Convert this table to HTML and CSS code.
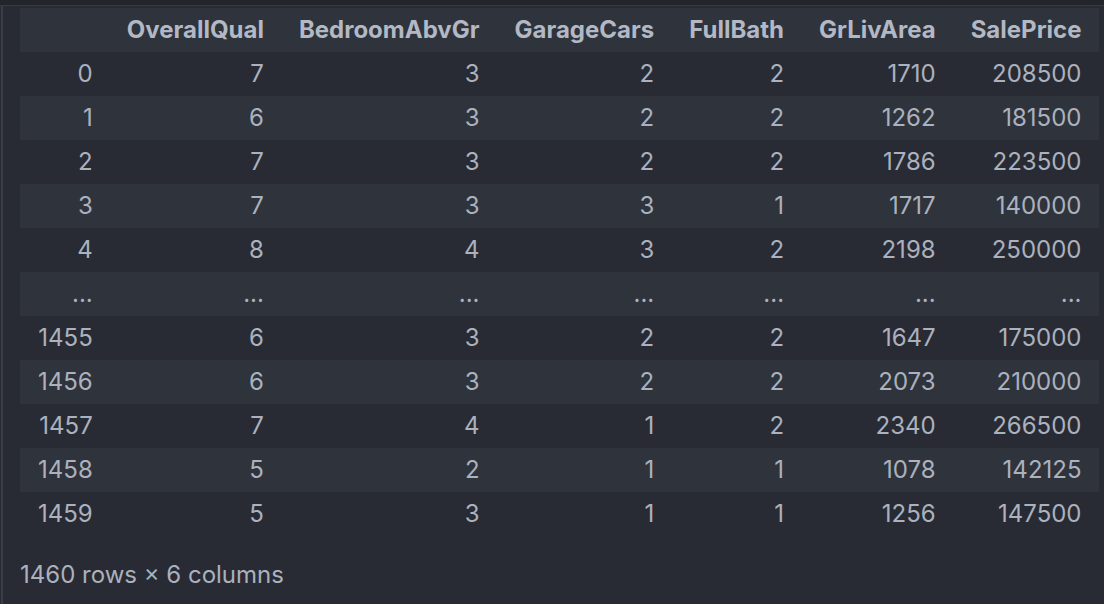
FILE: index.html
```html
<!DOCTYPE html>
<html>
<head>
<meta charset="utf-8">
<link rel="stylesheet" href="styles.css">
</head>
<body>
<div class="topbar"></div>
<div class="output">
  <table class="dataframe">
    <thead>
      <tr><th class="idx"></th><th>OverallQual</th><th>BedroomAbvGr</th><th>GarageCars</th><th>FullBath</th><th>GrLivArea</th><th>SalePrice</th></tr>
    </thead>
    <tbody>
      <tr><th class="idx">0</th><td>7</td><td>3</td><td>2</td><td>2</td><td>1710</td><td>208500</td></tr>
      <tr><th class="idx">1</th><td>6</td><td>3</td><td>2</td><td>2</td><td>1262</td><td>181500</td></tr>
      <tr><th class="idx">2</th><td>7</td><td>3</td><td>2</td><td>2</td><td>1786</td><td>223500</td></tr>
      <tr><th class="idx">3</th><td>7</td><td>3</td><td>3</td><td>1</td><td>1717</td><td>140000</td></tr>
      <tr><th class="idx">4</th><td>8</td><td>4</td><td>3</td><td>2</td><td>2198</td><td>250000</td></tr>
      <tr class="ellipsis"><th class="idx">...</th><td>...</td><td>...</td><td>...</td><td>...</td><td>...</td><td>...</td></tr>
      <tr><th class="idx">1455</th><td>6</td><td>3</td><td>2</td><td>2</td><td>1647</td><td>175000</td></tr>
      <tr><th class="idx">1456</th><td>6</td><td>3</td><td>2</td><td>2</td><td>2073</td><td>210000</td></tr>
      <tr><th class="idx">1457</th><td>7</td><td>4</td><td>1</td><td>2</td><td>2340</td><td>266500</td></tr>
      <tr><th class="idx">1458</th><td>5</td><td>2</td><td>1</td><td>1</td><td>1078</td><td>142125</td></tr>
      <tr><th class="idx">1459</th><td>5</td><td>3</td><td>1</td><td>1</td><td>1256</td><td>147500</td></tr>
    </tbody>
  </table>
  <p class="shape">1460 rows × 6 columns</p>
</div>
</body>
</html>
```
FILE: styles.css
```css
html, body {
  margin: 0;
  padding: 0;
  background: #282b33;
  height: 100%;
}
body {
  font-family: Inter, "Noto Sans", sans-serif;
  color: #abb1bd;
  font-size: 24px;
  overflow: hidden;
}
.topbar {
  height: 5px;
  background: #22252c;
  border-bottom: 1px solid #363a44;
}
.output {
  border-left: 2px solid #3a3e48;
  margin-left: 1px;
  padding: 2px 0 0 17px;
  height: 100%;
}
.dataframe {
  border-collapse: collapse;
  border-spacing: 0;
}
.dataframe th,
.dataframe td {
  height: 44px;
  padding: 0 17px 0 18px;
  text-align: right;
  white-space: nowrap;
  box-sizing: border-box;
  line-height: 44px;
}
.dataframe th.idx {
  padding-right: 16px;
}
.dataframe thead th {
  font-weight: 700;
  color: #b2b8c4;
  background: #2f333c;
}
.dataframe tbody th {
  font-weight: 400;
}
.dataframe tbody tr:nth-child(even) {
  background: #2f333c;
}
.shape {
  margin: 22px 0 0;
  line-height: 34px;
}
```
